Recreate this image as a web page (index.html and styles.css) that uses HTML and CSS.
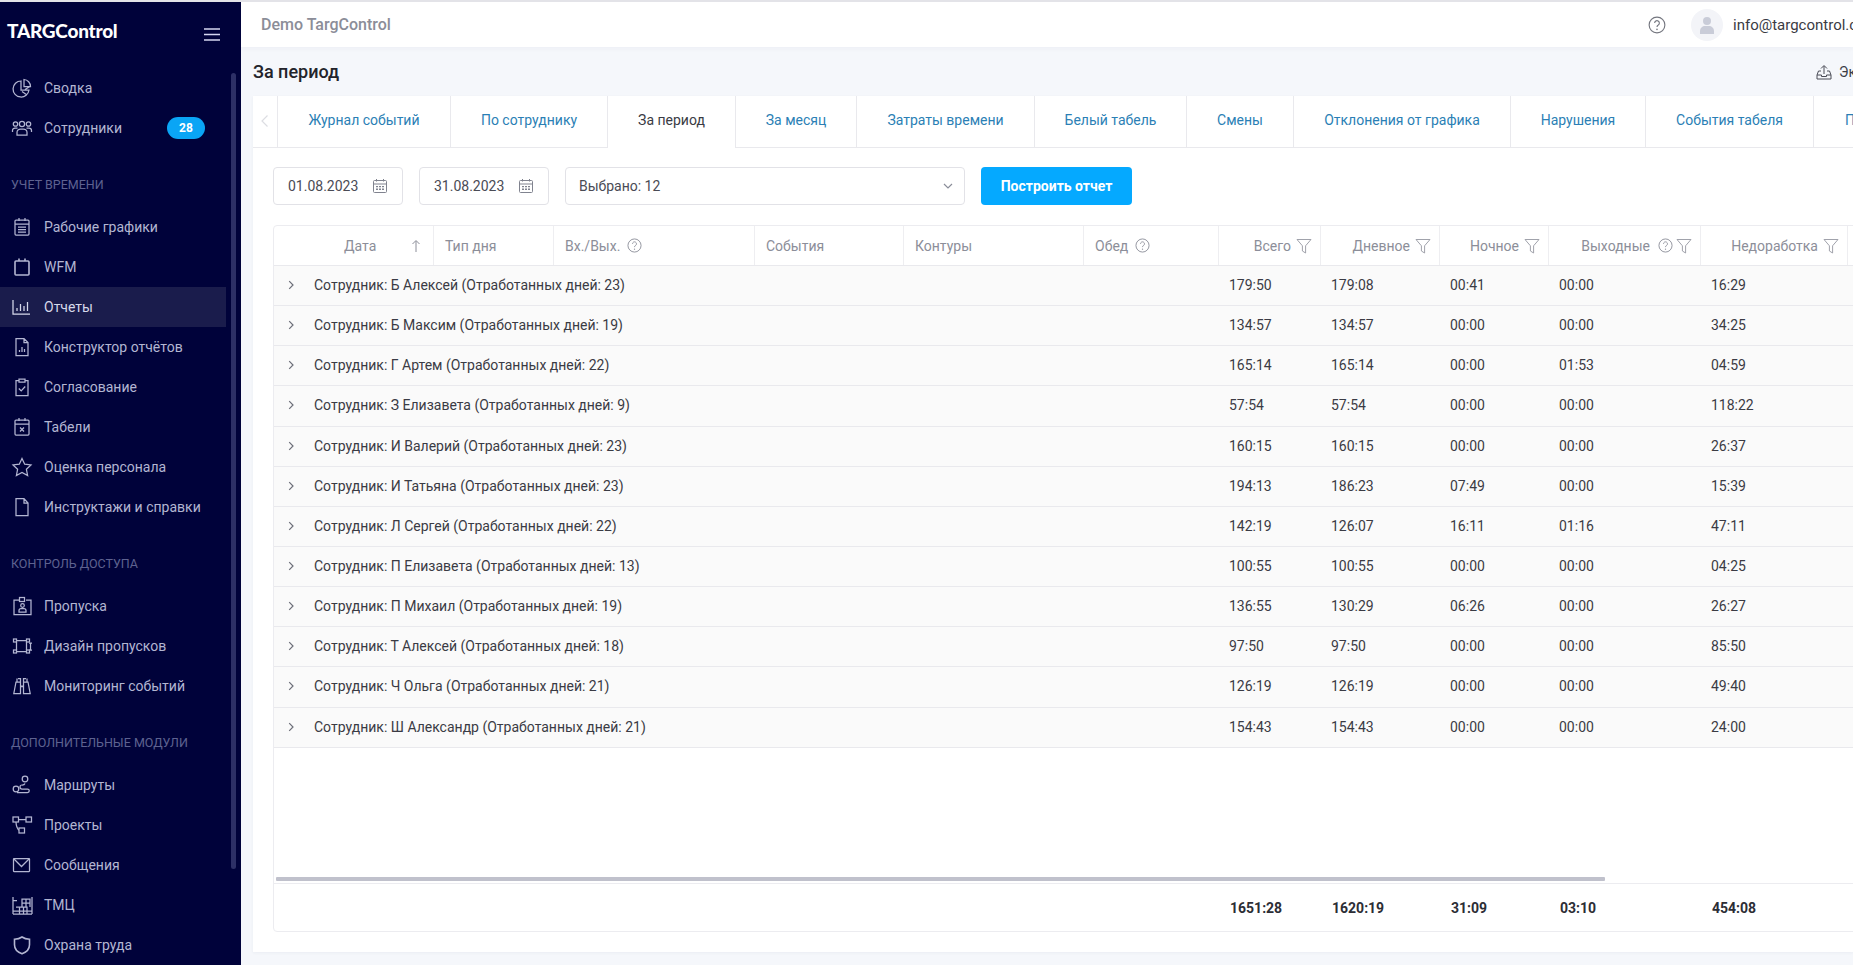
FILE: index.html
```html
<!DOCTYPE html>
<html lang="ru">
<head>
<meta charset="utf-8">
<title>За период</title>
<link rel="stylesheet" href="styles.css">
</head>
<body>
<svg class="defs" width="0" height="0" aria-hidden="true">
  <defs>
    <symbol id="i-help" viewBox="0 0 16 16"><circle cx="8" cy="8" r="7" fill="none" stroke="currentColor"/><path d="M5.9 6.2a2.1 2.1 0 1 1 3.2 1.8c-.7.4-1.1.8-1.1 1.7" fill="none" stroke="currentColor"/><circle cx="8" cy="11.9" r=".7" fill="currentColor"/></symbol>
    <symbol id="i-filter" viewBox="0 0 16 16"><path d="M1 1.5h14L9.6 7.8v7.2L6.4 13V7.8z" fill="none" stroke="currentColor"/></symbol>
    <symbol id="i-cal" viewBox="0 0 16 16"><g fill="none" stroke="currentColor"><rect x="1.5" y="2.5" width="13" height="12" rx="1"/><path d="M1.5 6h13M4.5 1v2.5M11.5 1v2.5"/></g><path d="M4 8h2v1.3H4zM7 8h2v1.3H7zM10 8h2v1.3h-2zM4 10.6h2v1.3H4zM7 10.6h2v1.3H7zM10 10.6h2v1.3h-2z" fill="currentColor"/></symbol>
    <symbol id="i-chev" viewBox="0 0 10 10"><path d="M3.2 1.2 7 5 3.2 8.8" fill="none" stroke="currentColor" stroke-width="1.2"/></symbol>
  </defs>
</svg>
<div class="topline"></div>
<div class="app">
  <aside class="sidebar">
    <div class="brand">
      <span class="logo">TARGControl</span>
      <svg class="burger" width="16" height="13" viewBox="0 0 16 13"><path d="M0 1h16M0 6.5h16M0 12h16" stroke="#d4d6f0" stroke-width="1.3"/></svg>
    </div>
    <nav class="nav">
      <a class="nav-item"><svg class="ico" viewBox="0 0 22 22"><path d="M10 4a8 8 0 1 0 8 9h-8zM13 2.500a7 7 0 0 1 6.500 7H13zM11 14.500l5 3.500M14 12.500l5-3"/></svg>Сводка</a>
      <a class="nav-item"><svg class="ico" viewBox="0 0 22 22"><circle cx="11" cy="7" r="2.600"/><circle cx="4.500" cy="7" r="2.200"/><circle cx="17.500" cy="7" r="2.200"/><path d="M6 18v-2.500a3.500 3.500 0 0 1 3.500-3.500h3a3.500 3.500 0 0 1 3.500 3.500V18zM1.500 15v-1.500a2.500 2.500 0 0 1 2.500-2.500h2.500M20.500 15v-1.500a2.500 2.500 0 0 0-2.500-2.500h-2.500"/></svg>Сотрудники<span class="badge">28</span></a>
      <div class="nav-label">Учет времени</div>
      <a class="nav-item"><svg class="ico" viewBox="0 0 22 22"><rect x="4" y="4" width="14" height="15" rx="1"/><path d="M8 2v3M14 2v3M4 8h14M7 11h8M7 13.500h8M7 16h8"/></svg>Рабочие графики</a>
      <a class="nav-item"><svg class="ico thick" viewBox="0 0 22 22"><rect x="4" y="5" width="14" height="14" rx="1"/><path d="M8 2.500V5M14 2.500V5"/></svg>WFM</a>
      <a class="nav-item active"><svg class="ico" viewBox="0 0 22 22"><path d="M2 4v14h17M6 15v-3M9.500 15V8M13 15v-5M16.500 15V6"/></svg>Отчеты</a>
      <a class="nav-item"><svg class="ico" viewBox="0 0 22 22"><path d="M5 2.500h8l4 4V19.500H5zM13 2.500v4h4M8.500 16v-2M11 16v-5M13.500 16v-3"/></svg>Конструктор отчётов</a>
      <a class="nav-item"><svg class="ico" viewBox="0 0 22 22"><path d="M8 4.500H5v15h12v-15h-3M8 3h6v3H8zM7.800 12.500l2.400 2.400 4-4.400"/></svg>Согласование</a>
      <a class="nav-item"><svg class="ico" viewBox="0 0 22 22"><rect x="4" y="4" width="14" height="15" rx="1"/><path d="M8 2v3M14 2v3M4 8h14M9 11.500l4 4M13 11.500l-4 4"/></svg>Табели</a>
      <a class="nav-item"><svg class="ico" viewBox="0 0 22 22"><path d="m11 2.500 2.700 5.700 6.300.8-4.600 4.300 1.200 6.200-5.600-3.100-5.600 3.100 1.200-6.200L2 9l6.300-.8z"/></svg>Оценка персонала</a>
      <a class="nav-item"><svg class="ico" viewBox="0 0 22 22"><path d="M5 2.500h8l4 4.500v12.500H5zM13 2.500V7h4"/></svg>Инструктажи и справки</a>
      <div class="nav-label">Контроль доступа</div>
      <a class="nav-item"><svg class="ico" viewBox="0 0 22 22"><path d="M8 5H3v14.500h17V5h-5"/><rect x="8.500" y="2.500" width="5" height="4"/><circle cx="11.500" cy="10.500" r="1.800"/><path d="M8 17v-1.500a2 2 0 0 1 2-2h3a2 2 0 0 1 2 2V17z"/></svg>Пропуска</a>
      <a class="nav-item"><svg class="ico" viewBox="0 0 22 22"><path d="M5.500 5.500h10M5.500 7v8M15.500 7v8M5.500 16.500h10M19.500 8v7M18 8h3M18 15h3"/><rect x="2.500" y="4" width="3" height="3"/><rect x="15.500" y="4" width="3" height="3"/><rect x="2.500" y="15" width="3" height="3"/><rect x="15.500" y="15" width="3" height="3"/></svg>Дизайн пропусков</a>
      <a class="nav-item"><svg class="ico" viewBox="0 0 22 22"><path d="M7 3.500h2.500V11h3V3.500H15M2.800 18.500 5 7h4.500v11.500zM12.500 18.500V7H17l2.200 11.500zM9.500 11.500h3M6 3.500v3.500M16 3.500v3.500"/></svg>Мониторинг событий</a>
      <div class="nav-label">Дополнительные модули</div>
      <a class="nav-item"><svg class="ico" viewBox="0 0 22 22"><circle cx="14" cy="5" r="2.800"/><circle cx="5" cy="15" r="2.800"/><path d="M14 9.500a3 2 0 0 1-3 1.500 2 2 0 0 0 0 4h5.500a1.700 1.700 0 0 1 0 3.500H6"/></svg>Маршруты</a>
      <a class="nav-item"><svg class="ico" viewBox="0 0 22 22"><rect x="2" y="3" width="5.500" height="5"/><rect x="15" y="3" width="5.500" height="5"/><rect x="8" y="14" width="5.500" height="5"/><path d="M7.500 5.500H15M5 8c0 4 2 8 3 8"/></svg>Проекты</a>
      <a class="nav-item"><svg class="ico" viewBox="0 0 22 22"><rect x="2.500" y="4.500" width="16" height="13" rx=".5"/><path d="m3 5 7.500 7.500L18 5"/></svg>Сообщения</a>
      <a class="nav-item"><svg class="ico" viewBox="0 0 22 22"><path d="M2 3v17M21 3v17M2 6.500h4M2 17h19M2 20h19M5 13h11v7M8.500 13v7M12.500 13v7M11 13V5h8v8M15 5v8M11 9h8"/></svg>ТМЦ</a>
      <a class="nav-item"><svg class="ico thick" viewBox="0 0 22 22"><path d="M11 3c2.500 1.800 4.700 2.200 7.500 2.300v5.500c0 4.200-3 7.400-7.500 9-4.500-1.600-7.500-4.800-7.500-9V5.300C6.300 5.200 8.500 4.800 11 3z"/></svg>Охрана труда</a>
    </nav>
    <div class="side-thumb"></div>
  </aside>

  <main class="main">
    <header class="topbar">
      <span class="org">Demo TargControl</span>
      <svg class="top-help"><use href="#i-help"/></svg>
      <span class="avatar"><svg width="20" height="20" viewBox="0 0 20 20"><circle cx="10" cy="6" r="4" fill="#c9ccd8"/><path d="M3 19v-3c0-3 2.500-5 5-5h4c2.500 0 5 2 5 5v3z" fill="#c9ccd8"/></svg></span>
      <span class="email">info@targcontrol.com</span>
    </header>

    <div class="titlebar">
      <h1 class="title">За период</h1>
      <span class="export"><svg width="16" height="16" viewBox="0 0 16 16"><path d="M8 10V2M5 4.500 8 1.500l3 3M5 7H2.500L1 11v4h14v-4l-1.500-4H11M1 11h4.500v1.500h5V11H15" fill="none" stroke="#4a4c57"/></svg>Экспорт</span>
    </div>

    <section class="card">
      <div class="tabs">
        <div class="tab-prev"><svg width="12" height="14" viewBox="0 0 12 14"><path d="M8.500 1.500 3 7l5.500 5.500" fill="none" stroke="#dcdde2" stroke-width="1.200"/></svg></div>
        <a class="tab tab-1">Журнал событий</a>
        <a class="tab tab-2">По сотруднику</a>
        <a class="tab tab-3 current">За период</a>
        <a class="tab tab-4">За месяц</a>
        <a class="tab tab-5">Затраты времени</a>
        <a class="tab tab-6">Белый табель</a>
        <a class="tab tab-7">Смены</a>
        <a class="tab tab-8">Отклонения от графика</a>
        <a class="tab tab-9">Нарушения</a>
        <a class="tab tab-10">События табеля</a>
        <a class="tab tab-11">Переработки</a>
      </div>

      <div class="filters">
        <div class="field date"><span>01.08.2023</span><svg class="cal"><use href="#i-cal"/></svg></div>
        <div class="field date"><span>31.08.2023</span><svg class="cal"><use href="#i-cal"/></svg></div>
        <div class="field select"><span>Выбрано: 12</span><svg width="12" height="12" viewBox="0 0 12 12"><path d="M2 4l4 4 4-4" fill="none" stroke="#8a8d99" stroke-width="1.200"/></svg></div>
        <button class="build">Построить отчет</button>
      </div>

      <div class="tbl">
        <div class="grid head">
          <div class="th th-date"><span>Дата</span><svg width="10" height="14" viewBox="0 0 10 14"><path d="M5 13V2M1.500 5 5 1.500 8.500 5" fill="none" stroke="#8c8e99"/></svg></div>
          <div class="th">Тип дня</div>
          <div class="th">Вх./Вых.<svg class="hint"><use href="#i-help"/></svg></div>
          <div class="th">События</div>
          <div class="th">Контуры</div>
          <div class="th">Обед<svg class="hint"><use href="#i-help"/></svg></div>
          <div class="th end">Всего<svg class="flt"><use href="#i-filter"/></svg></div>
          <div class="th end">Дневное<svg class="flt"><use href="#i-filter"/></svg></div>
          <div class="th end">Ночное<svg class="flt"><use href="#i-filter"/></svg></div>
          <div class="th end">Выходные<svg class="hint"><use href="#i-help"/></svg><svg class="flt"><use href="#i-filter"/></svg></div>
          <div class="th end">Недоработка<svg class="flt"><use href="#i-filter"/></svg></div>
          <div class="th"></div>
        </div>

        <div class="grid row"><div class="name"><svg class="exp"><use href="#i-chev"/></svg>Сотрудник: Б Алексей (Отработанных дней: 23)</div><div class="td">179:50</div><div class="td">179:08</div><div class="td">00:41</div><div class="td">00:00</div><div class="td">16:29</div></div>
        <div class="grid row"><div class="name"><svg class="exp"><use href="#i-chev"/></svg>Сотрудник: Б Максим (Отработанных дней: 19)</div><div class="td">134:57</div><div class="td">134:57</div><div class="td">00:00</div><div class="td">00:00</div><div class="td">34:25</div></div>
        <div class="grid row"><div class="name"><svg class="exp"><use href="#i-chev"/></svg>Сотрудник: Г Артем (Отработанных дней: 22)</div><div class="td">165:14</div><div class="td">165:14</div><div class="td">00:00</div><div class="td">01:53</div><div class="td">04:59</div></div>
        <div class="grid row"><div class="name"><svg class="exp"><use href="#i-chev"/></svg>Сотрудник: З Елизавета (Отработанных дней: 9)</div><div class="td">57:54</div><div class="td">57:54</div><div class="td">00:00</div><div class="td">00:00</div><div class="td">118:22</div></div>
        <div class="grid row"><div class="name"><svg class="exp"><use href="#i-chev"/></svg>Сотрудник: И Валерий (Отработанных дней: 23)</div><div class="td">160:15</div><div class="td">160:15</div><div class="td">00:00</div><div class="td">00:00</div><div class="td">26:37</div></div>
        <div class="grid row"><div class="name"><svg class="exp"><use href="#i-chev"/></svg>Сотрудник: И Татьяна (Отработанных дней: 23)</div><div class="td">194:13</div><div class="td">186:23</div><div class="td">07:49</div><div class="td">00:00</div><div class="td">15:39</div></div>
        <div class="grid row"><div class="name"><svg class="exp"><use href="#i-chev"/></svg>Сотрудник: Л Сергей (Отработанных дней: 22)</div><div class="td">142:19</div><div class="td">126:07</div><div class="td">16:11</div><div class="td">01:16</div><div class="td">47:11</div></div>
        <div class="grid row"><div class="name"><svg class="exp"><use href="#i-chev"/></svg>Сотрудник: П Елизавета (Отработанных дней: 13)</div><div class="td">100:55</div><div class="td">100:55</div><div class="td">00:00</div><div class="td">00:00</div><div class="td">04:25</div></div>
        <div class="grid row"><div class="name"><svg class="exp"><use href="#i-chev"/></svg>Сотрудник: П Михаил (Отработанных дней: 19)</div><div class="td">136:55</div><div class="td">130:29</div><div class="td">06:26</div><div class="td">00:00</div><div class="td">26:27</div></div>
        <div class="grid row"><div class="name"><svg class="exp"><use href="#i-chev"/></svg>Сотрудник: Т Алексей (Отработанных дней: 18)</div><div class="td">97:50</div><div class="td">97:50</div><div class="td">00:00</div><div class="td">00:00</div><div class="td">85:50</div></div>
        <div class="grid row"><div class="name"><svg class="exp"><use href="#i-chev"/></svg>Сотрудник: Ч Ольга (Отработанных дней: 21)</div><div class="td">126:19</div><div class="td">126:19</div><div class="td">00:00</div><div class="td">00:00</div><div class="td">49:40</div></div>
        <div class="grid row"><div class="name"><svg class="exp"><use href="#i-chev"/></svg>Сотрудник: Ш Александр (Отработанных дней: 21)</div><div class="td">154:43</div><div class="td">154:43</div><div class="td">00:00</div><div class="td">00:00</div><div class="td">24:00</div></div>

        <div class="spacer"></div>
        <div class="hscroll"><div class="hthumb"></div></div>
        <div class="grid foot">
          <div class="name"></div>
          <div class="td">1651:28</div><div class="td">1620:19</div><div class="td">31:09</div><div class="td">03:10</div><div class="td">454:08</div>
        </div>
      </div>
    </section>
  </main>
</div>
</body>
</html>
```
FILE: styles.css
```css
* { box-sizing: border-box; }
html, body { margin: 0; height: 100%; overflow: hidden; }
body { font-family: Roboto, "Liberation Sans", sans-serif; font-size: 14px; color: #3a3b44; background: #f5f7fb; }
.defs { position: absolute; }
.topline { height: 2px; background: #e3e3e8; }
.app { display: flex; height: 963px; }

.sidebar { position: relative; flex: 0 0 241px; background: #00023a; overflow: hidden; }
.brand { height: 66px; display: flex; align-items: center; justify-content: space-between; padding: 0 21px 0 7px; }
.logo { font-family: Lato, sans-serif; font-weight: 900; font-size: 19px; color: #fff; letter-spacing: -.25px; margin-top: -10px; }
.burger { margin-top: -1px; }
.nav { width: 226px; display: flex; flex-direction: column; }
.nav-item { height: 40px; flex: none; display: flex; align-items: center; gap: 11px; padding-left: 11px; color: #b3b6d2; }
.nav-item.active { background: #1a1c4c; color: #d6d8ea; }
.ico { width: 22px; height: 22px; flex: none; fill: none; stroke: currentColor; stroke-width: 1.25; }
.ico.thick { stroke-width: 1.6; }
.badge { margin-left: auto; margin-right: 21px; width: 38px; height: 22px; border-radius: 11px; background: #0aa5f5; color: #fff; font-size: 12px; font-weight: 700; display: flex; align-items: center; justify-content: center; }
.nav-label { flex: none; height: 59px; padding: 27px 0 0 11px; line-height: 20px; font-size: 12.5px; text-transform: uppercase; color: #5e6290; }
.side-thumb { position: absolute; left: 231px; top: 71px; width: 5px; height: 796px; border-radius: 3px; background: #2d3066; }

.main { flex: 1; min-width: 0; display: flex; flex-direction: column; overflow: hidden; }
.topbar { flex: none; height: 45px; background: #fff; display: flex; align-items: center; padding-left: 20px; box-shadow: 0 2px 4px rgba(40, 50, 90, .04); }
.org { font-size: 16px; font-weight: 500; color: #8b8d98; }
.top-help { width: 18px; height: 18px; margin-left: auto; color: #74767f; }
.avatar { width: 32px; height: 32px; margin-left: 25px; border-radius: 50%; background: #f3f4f8; display: flex; align-items: center; justify-content: center; flex: none; }
.email { flex: none; width: 120px; margin-left: 10px; font-size: 15px; color: #3a3b44; white-space: nowrap; }

.titlebar { flex: none; height: 49px; display: flex; align-items: center; justify-content: space-between; padding-left: 12px; }
.title { margin: 0; font-size: 18px; font-weight: 500; color: #23242b; }
.export { flex: none; width: 37px; display: flex; align-items: center; gap: 7px; white-space: nowrap; color: #3a3b44; }
.export svg { flex: none; }

.card { flex: 1; margin: 0 0 13px 12px; background: #fff; display: flex; flex-direction: column; overflow: hidden; box-shadow: 0 1px 3px rgba(40, 50, 90, .05); min-height: 0; }
.tabs { flex: none; height: 52px; display: flex; border-bottom: 1px solid #e9e9ed; }
.tab-prev { flex: 0 0 25px; display: flex; align-items: center; justify-content: center; padding-bottom: 2px; border-right: 1px solid #e9e9ed; }
.tab { flex: none; display: flex; align-items: center; justify-content: center; padding-bottom: 3px; color: #2b7fb5; border-right: 1px solid #e9e9ed; white-space: nowrap; }
.tab-1 { width: 173px; }
.tab-2 { width: 157px; }
.tab-3 { width: 128px; }
.tab-4 { width: 121px; }
.tab-5 { width: 178px; }
.tab-6 { width: 152px; }
.tab-7 { width: 107px; }
.tab-8 { width: 217px; }
.tab-9 { width: 135px; }
.tab-10 { width: 168px; }
.tab-11 { width: 120px; border-right: 0; justify-content: flex-start; padding-left: 31px; }
.tab.current { color: #3a3b44; position: relative; margin-bottom: -1px; padding-bottom: 4px; background: #fff; }

.filters { flex: none; display: flex; align-items: stretch; gap: 16px; height: 38px; margin: 19px 0 20px 20px; }
.field { height: 38px; border: 1px solid #e2e2e7; border-radius: 4px; display: flex; align-items: center; justify-content: space-between; color: #4a4b55; }
.field.date { width: 130px; padding: 0 14px 0 14px; }
.field.select { width: 400px; padding: 0 10px 0 13px; }
.cal { width: 16px; height: 16px; color: #80838f; }
.build { width: 151px; height: 38px; border: 0; border-radius: 4px; background: #05a9ff; color: #fff; font: 700 14px Roboto, sans-serif; }

.tbl { flex: 1; min-height: 0; width: 1800px; margin: 0 0 20px 20px; border: 1px solid #ececf0; border-radius: 4px; display: flex; flex-direction: column; }
.grid { display: grid; grid-template-columns: 160px 120px 201px 149px 180px 135px 102px 119px 109px 152px 147px 1fr; flex: none; }
.head { height: 40px; border-bottom: 1px solid #e9e9ed; }
.th { display: flex; align-items: center; gap: 7px; padding: 0 11px; color: #8c8e99; border-right: 1px solid #eeeef1; height: 39px; min-width: 0; white-space: nowrap; }
.th:last-child { border-right: 0; }
.th-date { padding-left: 70px; justify-content: space-between; padding-right: 12px; }
.end { justify-content: flex-end; gap: 2px; padding-right: 8px; }
.hint { width: 15px; height: 15px; color: #8f919c; }
.end .hint { margin: 0 -1.5px 0 5.5px; }
.flt { width: 16px; height: 16px; margin-left: 3px; color: #a0a2ab; flex: none; }
.row { height: 40.15px; padding-bottom: 1px; background: #fafafa; border-bottom: 1px solid #e9e9ed; align-items: center; }
.name { grid-column: 1 / span 6; display: flex; align-items: center; padding-left: 12px; white-space: nowrap; }
.exp { width: 10px; height: 10px; color: #6c6e78; margin-right: 18px; flex: none; }
.td { padding-left: 10px; white-space: nowrap; }
.spacer { flex: 1; }
.hscroll { flex: none; height: 6px; padding: 0 0 2px 2px; }
.hthumb { width: 1329px; height: 4px; border-radius: 1px; background: #c0c1cc; }
.foot { height: 48px; border-top: 1px solid #ececf0; align-items: center; font-weight: 700; color: #2c2d35; }
.foot .td { padding-left: 11px; }
```
